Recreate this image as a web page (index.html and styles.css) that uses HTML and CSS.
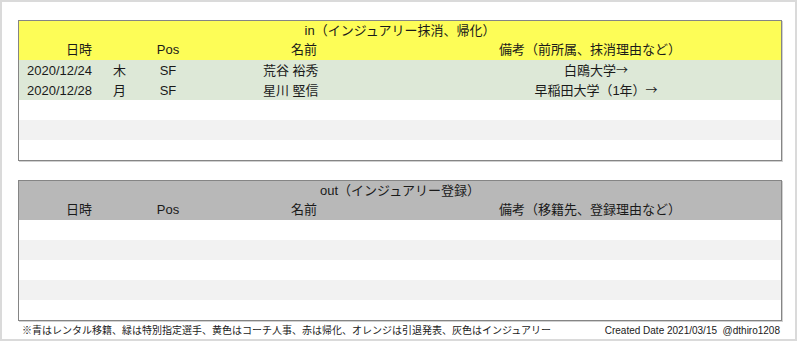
FILE: index.html
```html
<!DOCTYPE html>
<html lang="ja">
<head>
<meta charset="utf-8">
<link rel="stylesheet" href="styles.css">
</head>
<body>
<div class="frame">
  <div class="sheet in-sheet">
    <div class="row title yellow"><div class="span-all">in（インジュアリー抹消、帰化）</div></div>
    <div class="row head yellow">
      <div class="h-date">日時</div>
      <div class="c-pos">Pos</div>
      <div class="c-name-h">名前</div>
      <div class="c-note-h">備考（前所属、抹消理由など）</div>
    </div>
    <div class="row green">
      <div class="c-date">2020/12/24</div>
      <div class="c-day">木</div>
      <div class="c-pos">SF</div>
      <div class="c-name">荒谷 裕秀</div>
      <div class="c-note">白鴎大学<span class="arrow">→</span></div>
    </div>
    <div class="row green">
      <div class="c-date">2020/12/28</div>
      <div class="c-day">月</div>
      <div class="c-pos">SF</div>
      <div class="c-name">星川 堅信</div>
      <div class="c-note">早稲田大学（1年）<span class="arrow">→</span></div>
    </div>
    <div class="row blank"></div>
    <div class="row blank alt"></div>
    <div class="row blank"></div>
  </div>

  <div class="sheet out-sheet">
    <div class="row title gray"><div class="span-all">out（インジュアリー登録）</div></div>
    <div class="row head gray">
      <div class="h-date">日時</div>
      <div class="c-pos">Pos</div>
      <div class="c-name-h">名前</div>
      <div class="c-note-h">備考（移籍先、登録理由など）</div>
    </div>
    <div class="row blank"></div>
    <div class="row blank alt"></div>
    <div class="row blank"></div>
    <div class="row blank alt"></div>
    <div class="row blank"></div>
  </div>

  <div class="footer">
    <span>※青はレンタル移籍、緑は特別指定選手、黄色はコーチ人事、赤は帰化、オレンジは引退発表、灰色はインジュアリー</span>
    <span class="credit">Created Date 2021/03/15 &nbsp;@dthiro1208</span>
  </div>
</div>
</body>
</html>
```

FILE: styles.css
```css
* { box-sizing: border-box; }

html, body {
  margin: 0;
  padding: 0;
  background: #ffffff;
}

body {
  font-family: "Liberation Sans", Arial, "Noto Sans CJK JP", sans-serif;
  font-size: 13px;
  color: #1a1a1a;
}

.frame {
  width: 797px;
  height: 341px;
  border: 2px solid #dadada;
  padding: 18px 0 0 16px;
}

.sheet {
  width: 764px;
  border: 1px solid #858585;
  box-shadow: 1px 1px 0 #d0d0d0;
}

.out-sheet {
  margin-top: 19px;
}

.row {
  display: grid;
  grid-template-columns: 86px 34px 58px 214px 1fr;
  height: 20px;
  align-items: center;
  line-height: 20px;
  white-space: nowrap;
}

.row.title {
  height: 19px;
  line-height: 19px;
}

.span-all {
  grid-column: 1 / -1;
  text-align: center;
}

.yellow { background: #fdfd57; }
.green { background: #dde8d7; }
.gray { background: #b8b8b8; }
.alt { background: #f2f2f2; }

.h-date {
  grid-column: 1 / 3;
  text-align: center;
}

.c-date {
  grid-column: 1;
  padding-left: 8px;
}

.c-day {
  grid-column: 2;
  padding-left: 8px;
}

.c-pos {
  grid-column: 3;
  text-align: center;
}

.c-name-h {
  grid-column: 4;
  text-align: center;
}

.c-name {
  grid-column: 4;
  padding-left: 66px;
}

.c-note-h {
  grid-column: 5;
  text-align: center;
  padding-right: 12px;
}

.c-note {
  grid-column: 5;
  text-align: center;
}

.arrow {
  font-family: "Noto Sans CJK JP", sans-serif;
  font-size: 12px;
}

.footer {
  width: 764px;
  height: 18px;
  display: flex;
  justify-content: space-between;
  align-items: center;
  padding: 1px 2px 0 4px;
  font-size: 10px;
  line-height: 18px;
  white-space: nowrap;
}
```
